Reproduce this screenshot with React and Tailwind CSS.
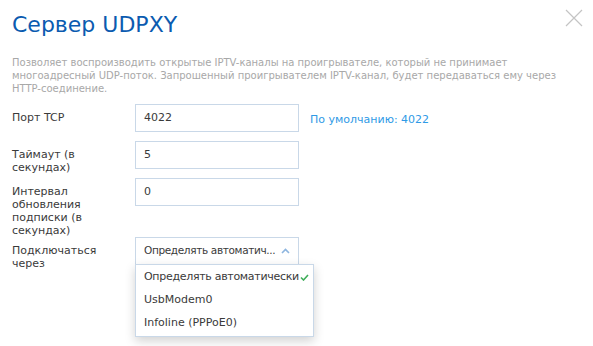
import React from 'react';

const rows = [
  { label: 'Порт TCP', value: '4022', hint: 'По умолчанию: 4022' },
  { label: 'Таймаут (в секундах)', value: '5' },
  { label: 'Интервал обновления подписки (в секундах)', value: '0' },
];

const options = ['Определять автоматически', 'UsbModem0', 'Infoline (PPPoE0)'];

const App = () => {
  return (
    <div className="w-[593px] h-[346px] bg-white overflow-hidden px-3 font-['DejaVu_Sans',Verdana,sans-serif] text-[#3a3a3a]">
      <header className="flex justify-between items-start pt-[11px]">
        <h1 className="text-[22px] leading-[28px] text-[#0b5bb0]">Сервер UDPXY</h1>
        <button className="mt-[-3px] mr-[-3px] text-[#c4c4c4]">
          <svg width="20" height="20" viewBox="0 0 20 20" fill="none" stroke="currentColor" strokeWidth="1.2">
            <path d="M2 2L18 18M18 2L2 18" />
          </svg>
        </button>
      </header>

      <p className="mt-[17px] text-[10px] leading-[13px] text-[#a8a8a8] pr-[2px]">
        Позволяет воспроизводить открытые IPTV-каналы на проигрывателе, который не принимает
        <br />
        многоадресный UDP-поток. Запрошенный проигрывателем IPTV-канал, будет передаваться ему через
        HTTP-соединение.
      </p>

      <div className="mt-[9px] text-[11px]">
        {rows.map((row) => (
          <div key={row.label} className="flex items-start">
            <label className="w-[123px] pr-5 pt-[7px] leading-[13px]">{row.label}</label>
            <div className="w-[164px] h-[28px] mb-[9px] border border-[#c9d8e8] px-2 flex items-center">
              {row.value}
            </div>
            {row.hint && (
              <span className="ml-[11px] mt-[8px] text-[#2f9ae6]">{row.hint}</span>
            )}
          </div>
        ))}

        <div className="flex items-start">
          <label className="w-[123px] pr-5 pt-[7px] leading-[13px]">Подключаться через</label>
          <div className="relative">
            <div className="w-[164px] h-[28px] border border-[#c9d8e8] pl-2 pr-[8px] flex items-center justify-between gap-[6px] whitespace-nowrap">
              <span className="text-[10.5px] tracking-[-0.35px] overflow-hidden">Определять автоматич...</span>
              <svg className="shrink-0" width="9" height="6" viewBox="0 0 9 6" fill="none" stroke="#8db5df" strokeWidth="1.6">
                <path d="M1 5L4.5 1.5L8 5" />
              </svg>
            </div>
            <ul className="absolute left-0 top-[27px] w-max min-w-[178px] bg-white border border-[#c9d8e8] shadow-[0_4px_10px_rgba(0,0,0,0.18)] py-[1px] pr-[4px] whitespace-nowrap">
              {options.map((opt, i) => (
                <li key={opt} className="h-[23px] pl-2 flex items-center">
                  <span className={i === 0 ? 'tracking-[-0.3px]' : ''}>{opt}</span>
                  {i === 0 && (
                    <svg className="ml-[1px]" width="9" height="7" viewBox="0 0 9 7" fill="none" stroke="#3fae5a" strokeWidth="1.6">
                      <path d="M1 3.5L3.5 6L8 1" />
                    </svg>
                  )}
                </li>
              ))}
            </ul>
          </div>
        </div>
      </div>
    </div>
  );
};

export default App;
